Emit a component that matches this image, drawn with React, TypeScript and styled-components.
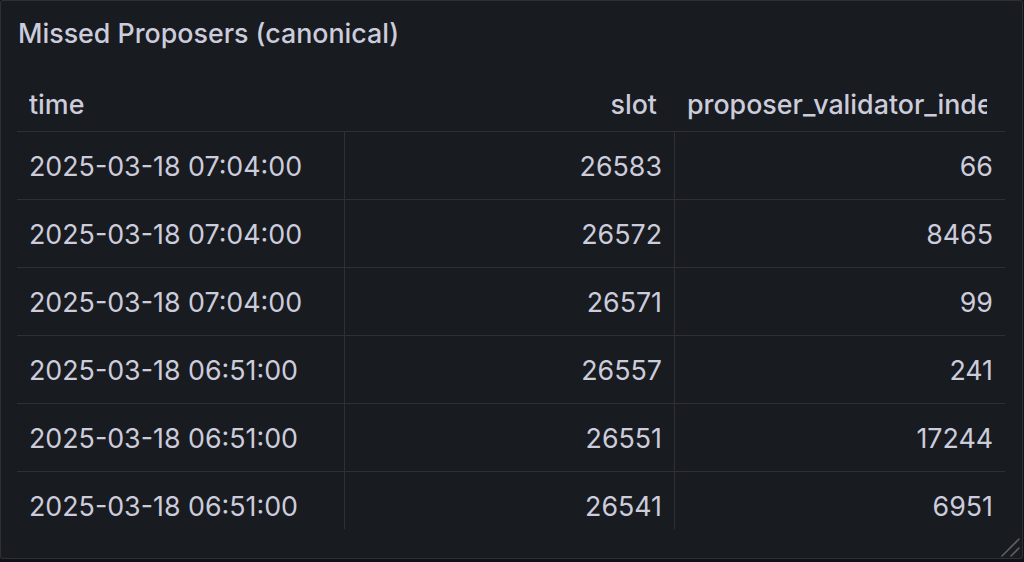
import React from "react";
import styled, { createGlobalStyle } from "styled-components";

const Global = createGlobalStyle`
  html, body { margin: 0; padding: 0; background: #111217; }
  body { font-family: Inter, "Noto Sans", sans-serif; color: #ccccdc; }
  * { box-sizing: border-box; }
`;

const Panel = styled.section`
  position: relative;
  width: 1023px;
  height: 559px;
  background: #181b1f;
  border: 1px solid rgba(204, 204, 220, 0.12);
  border-radius: 3px;
  display: flex;
  flex-direction: column;
  padding: 0 17px 29px 16px;
  overflow: hidden;
`;

const Title = styled.h2`
  margin: 0;
  height: 64px;
  display: flex;
  align-items: center;
  padding-left: 1px;
  font-size: 26.8px;
  font-weight: 500;
  color: #ccccdc;
  letter-spacing: 0;
`;

const Table = styled.div`
  margin-top: 11px;
  display: flex;
  flex-direction: column;
  flex: 1;
  min-height: 0;
`;

const Row = styled.div<{ $header?: boolean }>`
  display: grid;
  grid-template-columns: 328px 330px 330px;
  height: ${(p) => (p.$header ? 56 : 68)}px;
  flex: none;
  border-bottom: 1px solid rgba(204, 204, 220, 0.12);
`;

const Body = styled.div`
  flex: 1;
  min-height: 0;
  overflow: hidden;
`;

const HeadCell = styled.div<{ $right?: boolean }>`
  display: flex;
  align-items: center;
  justify-content: ${(p) => (p.$right ? "flex-end" : "flex-start")};
  padding: 0 18px 0 12px;
  font-size: 26.8px;
  font-weight: 500;
  white-space: nowrap;
  min-width: 0;
`;

const HeadLabel = styled.span`
  display: block;
  overflow: hidden;
  white-space: nowrap;
  text-overflow: clip;
  min-width: 0;
`;

const Cell = styled.div<{ $right?: boolean; $last?: boolean }>`
  display: flex;
  align-items: center;
  justify-content: ${(p) => (p.$right ? "flex-end" : "flex-start")};
  padding: 0 12px 0 12px;
  font-size: 26.8px;
  font-weight: 400;
  white-space: nowrap;
  border-right: ${(p) => (p.$last ? "none" : "1px solid rgba(204, 204, 220, 0.12)")};
`;

const Resize = styled.svg`
  position: absolute;
  right: 2px;
  bottom: 1px;
`;

const rows = [
  ["2025-03-18 07:04:00", "26583", "66"],
  ["2025-03-18 07:04:00", "26572", "8465"],
  ["2025-03-18 07:04:00", "26571", "99"],
  ["2025-03-18 06:51:00", "26557", "241"],
  ["2025-03-18 06:51:00", "26551", "17244"],
  ["2025-03-18 06:51:00", "26541", "6951"],
];

export default function App() {
  return (
    <>
      <Global />
      <Panel>
        <Title>Missed Proposers (canonical)</Title>
        <Table>
          <Row $header>
            <HeadCell><HeadLabel>time</HeadLabel></HeadCell>
            <HeadCell $right><HeadLabel>slot</HeadLabel></HeadCell>
            <HeadCell><HeadLabel>proposer_validator_index</HeadLabel></HeadCell>
          </Row>
          <Body>
            {rows.map((r, i) => (
              <Row key={i}>
                <Cell>{r[0]}</Cell>
                <Cell $right>{r[1]}</Cell>
                <Cell $right $last>{r[2]}</Cell>
              </Row>
            ))}
          </Body>
        </Table>
        <Resize width="20" height="20" viewBox="0 0 20 20">
          <path d="M2 19 L19 2 M11 19 L19 11" stroke="#5c5e66" strokeWidth="1.6" strokeLinecap="round" fill="none" />
        </Resize>
      </Panel>
    </>
  );
}
